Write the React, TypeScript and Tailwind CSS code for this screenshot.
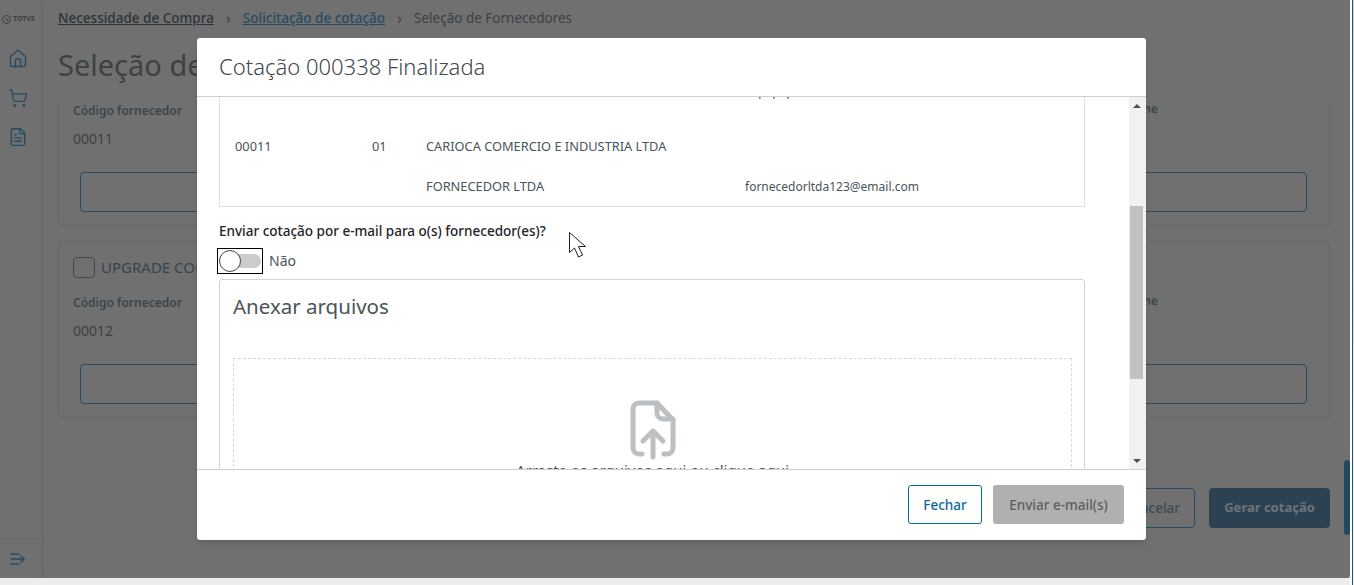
import { FileText, House, ShoppingCart } from "lucide-react";

const font = { fontFamily: '"Noto Sans", sans-serif' };

function SupplierCard({ code, title }: { code: string; title?: string }) {
  return (
    <div className="relative h-[177px] rounded-[4px] border border-[#666] px-[14px] pt-[14px]">
      <div className="flex h-[22px] items-center gap-[6px]">
        <span className="h-[21px] w-[22px] rounded-[4px] border border-[#3d4850]" />
        <span className="text-[15px] text-[#3a444b]">{title}</span>
      </div>
      <div className="mt-[17px] text-[12px] leading-[16px] font-semibold text-[#3c454b]">Código fornecedor</div>
      <div className="mt-[12px] text-[14px] leading-[16px] text-[#3c4144]">{code}</div>
      <div className="absolute top-[51px] right-[171px] text-[12px] leading-[16px] font-semibold text-[#3c454b]">Telefone</div>
      <div className="mt-[25px] ml-[7px] h-[40px] w-[1227px] rounded-[4px] border border-[#264b63]" />
    </div>
  );
}

function Sidebar() {
  return (
    <aside className="flex h-full w-[43px] shrink-0 flex-col rounded-r-[5px] border-r border-[#656565] bg-[#707070]">
      <div className="flex h-[49px] items-start gap-[2px] pt-[13px] pl-[2px]">
        <span className="mt-[2px] flex h-[9px] w-[9px] items-center justify-center rounded-full border-[1.5px] border-[#3c4144]">
          <span className="h-[1px] w-[4px] rotate-45 bg-[#3c4144]" />
        </span>
        <span className="text-[7px] leading-[12px] font-bold text-[#3c4144]">TOTVS</span>
      </div>
      <div className="flex flex-col items-center gap-[19px] pr-[6px] text-[#264b63]">
        <House size={20} strokeWidth={1.7} />
        <ShoppingCart size={20} strokeWidth={1.5} />
        <FileText size={20} strokeWidth={1.7} />
      </div>
      <div className="mt-auto flex h-[40px] items-center justify-center border-t border-[#656565] pr-[6px]">
        <svg width="16" height="14" viewBox="0 0 16 14" fill="none" stroke="#264b63" strokeWidth="1.5" strokeLinecap="round" strokeLinejoin="round">
          <path d="M1 2h8M1 7h13M1 12h8M11 4l3 3-3 3" />
        </svg>
      </div>
    </aside>
  );
}

function Page() {
  return (
    <div className="flex h-[578px] w-[1350px] rounded-br-[2px] bg-[#707070]">
      <Sidebar />
      <main className="relative flex-1 pr-[20px] pl-[15px]">
        <nav className="flex h-[36px] items-center text-[13.5px]">
          <span className="font-medium text-[#2d3438] underline">Necessidade de Compra</span>
          <span className="mx-[12px] text-[16px] text-[#3c4144]">›</span>
          <span className="font-medium text-[#264b63] underline">Solicitação de cotação</span>
          <span className="mx-[12px] text-[16px] text-[#3c4144]">›</span>
          <span className="text-[#3c4144]">Seleção de Fornecedores</span>
        </nav>
        <h1 className="mt-[7px] h-[44px] text-[29px] leading-[44px] text-[#3c4144]">Seleção de Fornecedores</h1>
        <div className="mt-[16px] h-[316px] overflow-hidden">
          <div className="mt-[-54px] flex flex-col gap-[15px]">
            <SupplierCard code="00011" />
            <SupplierCard code="00012" title="UPGRADE COMERCIO" />
          </div>
        </div>
        <div className="absolute top-[488px] right-[20px] flex gap-[14px]">
          <button className="h-[40px] rounded-[4px] border border-[#264b63] px-[14px] text-[13.5px] font-medium text-[#3c4a53]">Cancelar</button>
          <button className="h-[40px] w-[121px] rounded-[4px] bg-[#2c4252] text-[13px] font-bold text-[#6c7478]">Gerar cotação</button>
        </div>
        <div className="absolute top-[460px] right-0 h-[75px] w-[6px] rounded-[3px] bg-[#24485f]" />
      </main>
    </div>
  );
}

function ModalBody() {
  return (
    <div className="min-w-0 flex-1 overflow-hidden pr-[44px] pl-[22px] text-[#4a5459]">
      <div className="mt-[-1px] flex h-[111px] flex-col border-x border-b border-[#e0e0e0] text-[12.8px]">
        <div className="mt-[-24px] h-[40px] shrink-0 pl-[525px] text-[12px] leading-[40px]">supapapelaria@email.com</div>
        <div className="mt-[15px] flex h-[40px] shrink-0 items-center">
          <span className="ml-[15px] w-[137px]">00011</span>
          <span className="w-[54px]">01</span>
          <span>CARIOCA COMERCIO E INDUSTRIA LTDA</span>
        </div>
        <div className="flex h-[39px] shrink-0 items-center">
          <span className="ml-[206px] w-[319px]">FORNECEDOR LTDA</span>
          <span className="text-[12px]">fornecedorltda123@email.com</span>
        </div>
      </div>
      <div className="mt-[15px] text-[13.5px] leading-[18px] font-medium text-[#1f2326]">Enviar cotação por e-mail para o(s) fornecedor(es)?</div>
      <div className="mt-[8px] flex h-[25px] items-center">
        <div className="ml-[-2px] flex h-[26px] w-[46px] items-center border border-black pl-[1px]">
          <div className="relative h-[14px] w-[42px] rounded-full bg-[#cccccc]">
            <span className="absolute top-[-4px] left-0 h-[22px] w-[22px] rounded-full border border-[#4b4350] bg-white" />
          </div>
        </div>
        <span className="ml-[6px] text-[14px] text-[#4a5459]">Não</span>
      </div>
      <div className="mt-[6px] h-[260px] rounded-[3px] border border-[#d4d4d4] pt-[12px] pr-[12px] pl-[13px]">
        <h2 className="h-[28px] text-[20.5px] leading-[28px] text-[#4a5459]">Anexar arquivos</h2>
        <div className="mt-[38px] h-[200px] border border-dashed border-[#d8d8d8] pt-[41px]">
          <div className="flex flex-col items-center">
            <svg width="46" height="60" viewBox="0 0 46 60" fill="none" stroke="#bcc0c2" strokeWidth="5" strokeLinecap="round" strokeLinejoin="round">
              <path d="M12 54H9a6 6 0 0 1-6-6V9a6 6 0 0 1 6-6h18l16 17v28a6 6 0 0 1-6 6h-3" />
              <path d="M27 3v10a6 6 0 0 0 6 6h10" />
              <path d="M23 57V32M13 41l10-10 10 10" />
            </svg>
            <span className="mt-[-1px] text-[15px] text-[#4a5459]">Arraste os arquivos aqui ou clique aqui</span>
          </div>
        </div>
      </div>
    </div>
  );
}

function Scrollbar() {
  return (
    <div className="flex w-[17px] shrink-0 flex-col items-center bg-[#f1f1f1] pr-[2px]">
      <div className="flex h-[17px] items-center justify-center">
        <span className="h-0 w-0 border-x-[4px] border-b-[4px] border-x-transparent border-b-[#505050]" />
      </div>
      <div className="mt-[92px] h-[173px] w-[13px] bg-[#c1c1c1]" />
      <div className="mt-auto flex h-[17px] items-center justify-center">
        <span className="h-0 w-0 border-x-[4px] border-t-[4px] border-x-transparent border-t-[#505050]" />
      </div>
    </div>
  );
}

function Modal() {
  return (
    <div className="absolute top-[38px] left-[197px] flex h-[502px] w-[949px] flex-col rounded-[3px] bg-white shadow-md">
      <header className="flex h-[59px] shrink-0 items-center border-b border-[#cfcfcf] pb-[1px] pl-[22px]">
        <h2 className="text-[22px] font-light text-[#3f494e]">Cotação 000338 Finalizada</h2>
      </header>
      <div className="flex min-h-0 flex-1">
        <ModalBody />
        <Scrollbar />
      </div>
      <footer className="flex h-[71px] shrink-0 items-start justify-end gap-[11px] border-t border-[#cfcfcf] pt-[15px] pr-[22px]">
        <button className="h-[39px] w-[74px] rounded-[3px] border border-[#0c6a92] pt-[1px] text-[13.5px] font-medium text-[#0c6a92]">Fechar</button>
        <button className="h-[39px] w-[131px] rounded-[3px] bg-[#b0b0b0] pt-[1px] text-[13.5px] font-medium text-[#5e5e5e]">Enviar e-mail(s)</button>
      </footer>
    </div>
  );
}

function Cursor() {
  return (
    <svg className="absolute top-[232px] left-[569px]" width="19" height="28" viewBox="0 0 19 28" fill="white" stroke="#222" strokeWidth="1">
      <path d="M.5.5v20l5-4.5 4 9 4-2-4-8.500h7z" />
    </svg>
  );
}

export default function App() {
  return (
    <div style={font} className="relative h-[585px] w-[1354px] overflow-hidden bg-gradient-to-b from-[#cfcfcf] to-[#ededed]">
      <Page />
      <div className="absolute top-0 right-[1px] h-full w-[1px] bg-[#1d5d70]" />
      <div className="absolute top-0 right-[2px] h-full w-[2px] bg-white" />
      <Modal />
      <Cursor />
    </div>
  );
}
